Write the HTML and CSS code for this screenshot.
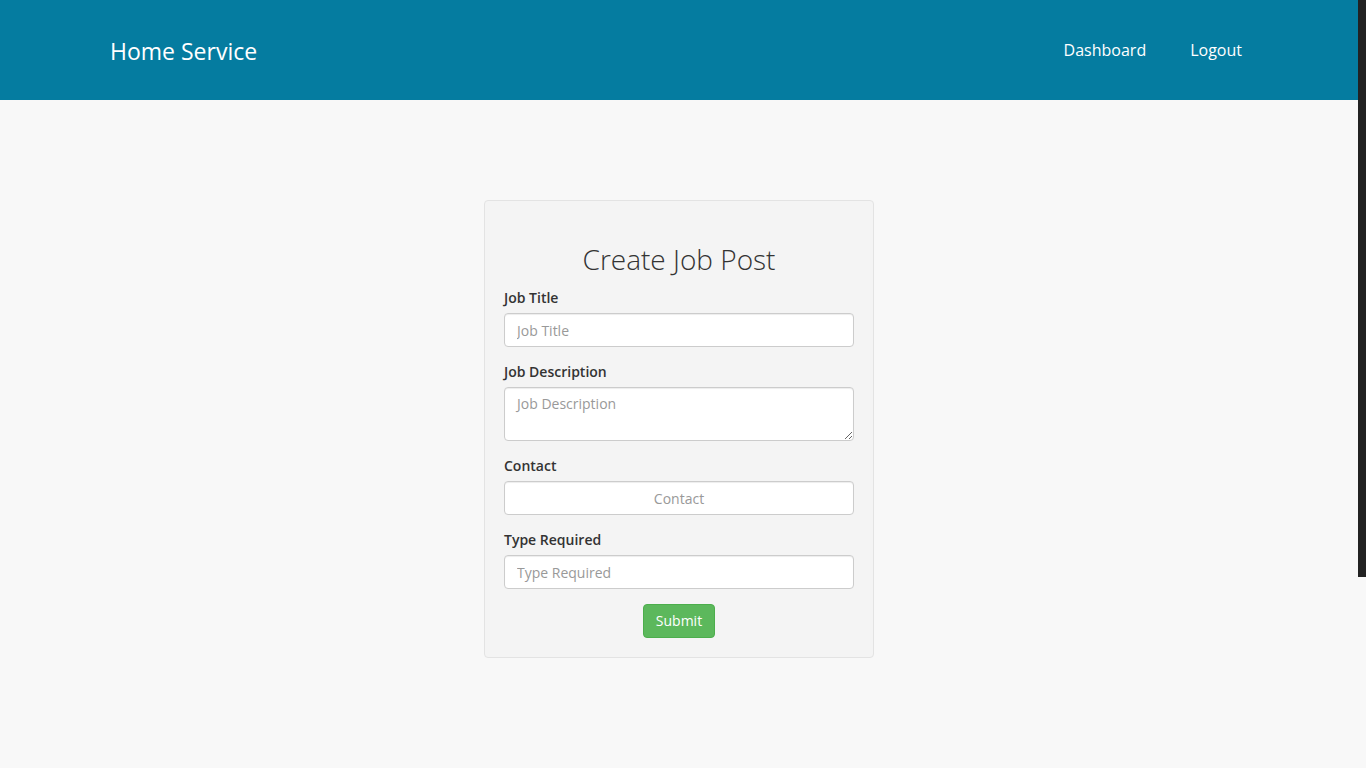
FILE: index.html
```html
<!DOCTYPE html>
<html lang="en">
<head>
<meta charset="utf-8">
<title>Create Job Post</title>
<link rel="stylesheet" href="styles.css">
</head>
<body>
<div class="page">
  <header class="topbar">
    <div class="container bar-inner">
      <a class="brand" href="#">Home Service</a>
      <nav class="nav">
        <a href="#">Dashboard</a>
        <a href="#">Logout</a>
      </nav>
    </div>
  </header>
  <main class="main">
    <form class="well">
      <h2 class="title">Create Job Post</h2>
      <div class="form-group">
        <label for="t">Job Title</label>
        <input id="t" class="control" type="text" placeholder="Job Title">
      </div>
      <div class="form-group">
        <label for="d">Job Description</label>
        <textarea id="d" class="control area" placeholder="Job Description"></textarea>
      </div>
      <div class="form-group">
        <label for="c">Contact</label>
        <input id="c" class="control centered" type="text" placeholder="Contact">
      </div>
      <div class="form-group">
        <label for="r">Type Required</label>
        <input id="r" class="control" type="text" placeholder="Type Required">
      </div>
      <div class="actions">
        <button type="button" class="btn-success">Submit</button>
      </div>
    </form>
  </main>
</div>
<div class="rail"><div class="thumb"></div></div>
</body>
</html>
```

FILE: styles.css
```css
* { box-sizing: border-box; }
html, body { height: 100%; }
body {
  margin: 0;
  display: flex;
  overflow: hidden;
  background: #f8f8f8;
  font-family: "Open Sans", "Liberation Sans", sans-serif;
  font-size: 14px;
  line-height: 1.42857;
  color: #333;
}
.page { flex: 1; min-width: 0; }
.rail { width: 8px; flex: none; background: #f8f8f8; }
.thumb { height: 577px; background: #222; }

.topbar { background: #057ca0; height: 100px; }
.container { width: 1170px; margin: 0 auto; padding: 0 15px; }
.bar-inner { display: flex; align-items: center; justify-content: space-between; height: 100%; }
.brand { color: #fff; text-decoration: none; font-size: 23px; margin-left: 1px; margin-top: 2px; }
.nav { display: flex; gap: 44px; margin-right: 7px; }
.nav a { color: #fff; text-decoration: none; font-size: 16px; }

.main { display: flex; justify-content: center; padding-top: 100px; }
.well {
  width: 390px;
  background: #f4f4f4;
  border: 1px solid #e3e3e3;
  border-radius: 4px;
  padding: 19px;
}
.title {
  margin: 24px 0 13px;
  font-size: 28px;
  font-weight: 300;
  line-height: 1.1;
  text-align: center;
  color: #333;
}
.form-group { margin-bottom: 15px; }
label { display: block; font-weight: 600; margin-bottom: 5px; }
.control {
  display: block;
  width: 100%;
  height: 34px;
  padding: 7px 12px 5px;
  font: inherit;
  font-size: 14px;
  color: #555;
  background: #fff;
  border: 1px solid #ccc;
  border-radius: 4px;
  box-shadow: inset 0 1px 1px rgba(0,0,0,.075);
}
.control::placeholder { color: #999; }
.area { height: 54px; padding-top: 6px; }
.centered { text-align: center; }
.actions { display: flex; justify-content: center; }
.btn-success {
  height: 34px;
  padding: 6px 12px;
  font: inherit;
  font-size: 14px;
  color: #fff;
  background: #5cb85c;
  border: 1px solid #4cae4c;
  border-radius: 4px;
}
```
